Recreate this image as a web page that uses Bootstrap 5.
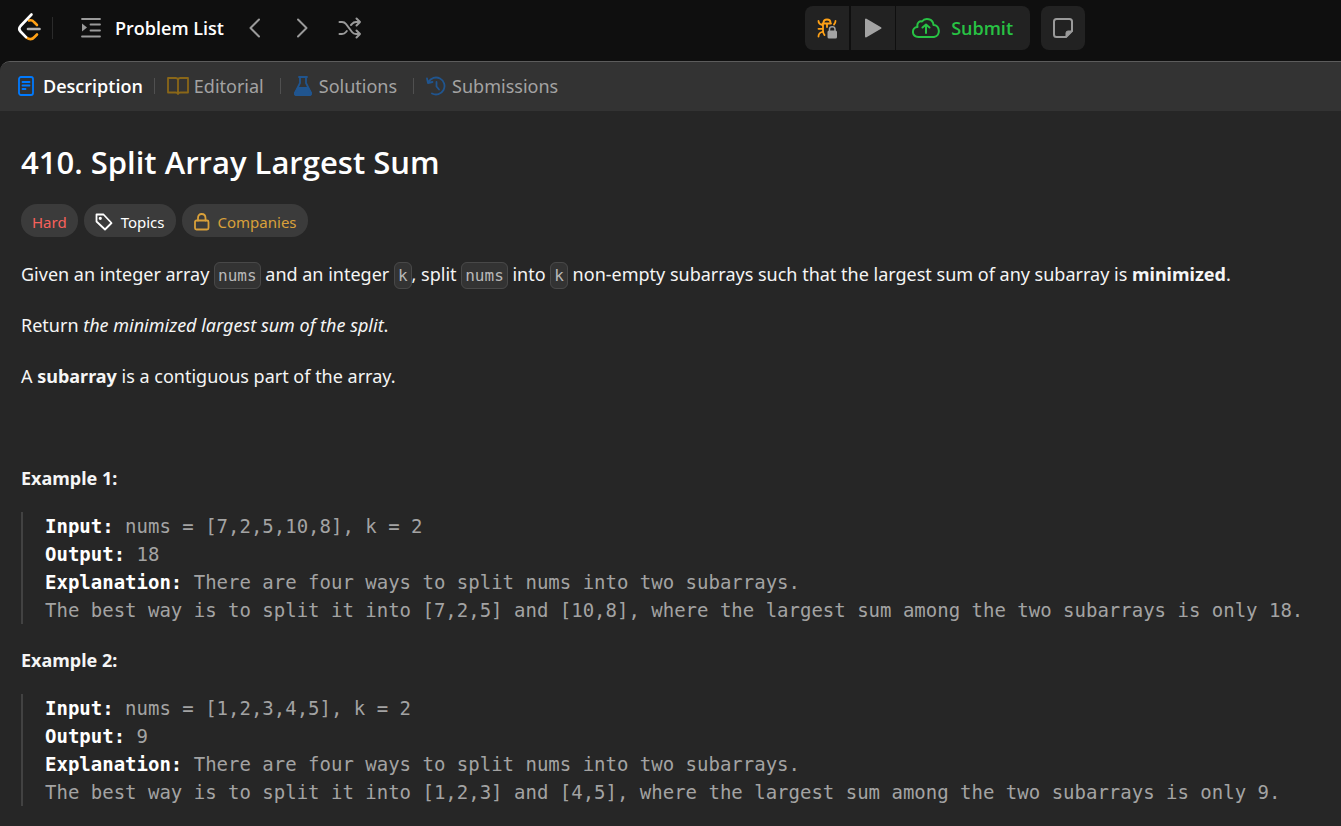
<!DOCTYPE html>
<html lang="en" data-bs-theme="dark">
<head>
<meta charset="utf-8">
<meta name="viewport" content="width=device-width, initial-scale=1">
<title>410. Split Array Largest Sum</title>
<link href="https://cdn.jsdelivr.net/npm/bootstrap@5.3.0/dist/css/bootstrap.min.css" rel="stylesheet">
<style>
  body { background: #0f0f0f; color: #f5f5f5; font-family: "Noto Sans", "Open Sans", sans-serif; font-size: 18px; line-height: 26px; }
  svg { display: block; flex: none; fill: none; stroke: currentColor; stroke-linecap: round; stroke-linejoin: round; }
  .topbar { display: grid; grid-template-columns: 60% auto 1fr; height: 61px; padding: 6px 0 11px; color: #9a9a9a; }
  .topbar a, .topbar button { color: inherit; text-decoration: none; }
  .plain-btn { background: none; border: 0; padding: 0; }
  .brand-rule { width: 1px; height: 22px; background: #2b2b2b; }
  .list-link { font-family: "Open Sans", sans-serif; font-weight: 600; font-size: 18px; gap: 14px; }
  .steps { gap: 26px; margin-left: 22px; }
  .tool-btn { background: #222; border: 0; height: 44px; width: 44px; padding: 0; display: flex; align-items: center; justify-content: center; }
  .tool-first { border-radius: 8px 0 0 8px; }
  .tool-run { margin: 0 1px 0 2px; }
  .tool-note { margin-left: 11px; }
  .tool-submit { border-radius: 0 8px 8px 0; width: 134px; font-family: "Open Sans", sans-serif; font-weight: 600; font-size: 18px; gap: 11px; }
  .topbar .tool-submit { color: #28c244; }
  .panel { background: #262626; border-top: 1px solid #5c5c5c; border-radius: 10px 0 0 0; overflow: hidden; }
  .tabs { background: #333; height: 49px; padding: 0 0 1px 18px; }
  .tabs a { color: #a3a3a3; text-decoration: none; display: flex; align-items: center; gap: 6px; }
  .tabs a.current { color: #fff; font-family: "Open Sans", sans-serif; font-weight: 600; gap: 9px; }
  .tabs .tab-tight { gap: 5px; }
  .tone-blue { color: #007aff; }
  .tone-gold { color: #8a6718; }
  .tone-navy { color: #20558f; }
  .tab-rule { width: 1px; height: 16px; background: #505050; margin: 0 12px 0 11px; }
  .problem { padding: 29px 21px 18px; }
  .problem h1 { font-family: "Open Sans", sans-serif; font-weight: 600; font-size: 31px; line-height: 44px; margin: 0 0 20px; }
  .pills { gap: 6px; }
  .pill { background: #3b3b3b; border: 0; border-radius: 16px; height: 33px; padding: 2px 11px 0; font-size: 15px; display: flex; align-items: center; gap: 8px; color: #fff; }
  .pill-hard { color: #f8615c; }
  .pill-gold { color: #d9a03a; }
  .problem p { margin: 0 0 25px; line-height: 26px; }
  .problem p.example-title { margin-bottom: 21px; }
  .problem p strong { font-weight: 700; }
  .problem code { font-family: "DejaVu Sans Mono", monospace; font-size: 16px; line-height: 20px; color: #b8b8b8; background: #333; border: 1px solid #484848; border-radius: 6px; padding: 3px; }
  .problem pre { font-family: "DejaVu Sans Mono", monospace; font-size: 19px; line-height: 28px; color: #a3a3a3; border-left: 2px solid #424242; padding-left: 22px; margin: 0 0 23px; overflow: visible; }
  .problem pre strong { color: #fff; font-weight: 700; }
</style>
</head>
<body>
<header class="topbar">
  <nav class="d-flex align-items-center">
    <a href="#" aria-label="Home" class="ms-3"><svg width="28" height="32" viewBox="0 0 28 32" stroke-width="2.600"><path stroke="#ffa116" d="M13 8.500Q16 7.500 18 10L21 13M10.500 25.500Q15 28.800 18.500 25L21 22.500"/><path stroke="#b3b3b3" d="M12 17H23.500"/><path stroke="#fff" d="M15.500 2.500 4.500 14Q2 16.800 4.500 19.500L10 25.200"/></svg></a>
    <span class="brand-rule ms-2 me-4"></span>
    <a href="#" class="list-link d-flex align-items-center"><svg class="ms-1" width="20" height="20" viewBox="0 0 20 20" stroke-width="1.800"><path d="M1 1H19M9.500 6.500H19M9.500 12.500H19M1 18.500H19"/><path d="M1 5.500 6 9.500 1 13.500Z" fill="currentColor" stroke="none"/></svg><span class="text-white">Problem List</span></a>
    <div class="steps d-flex align-items-center">
      <button class="plain-btn" aria-label="Previous problem"><svg width="18" height="22" viewBox="0 0 18 22" stroke-width="2"><path d="M13 2.500 4.500 11 13 19.500"/></svg></button>
      <button class="plain-btn" aria-label="Next problem"><svg width="22" height="22" viewBox="0 0 22 22" stroke-width="2"><path d="M8 2.500 16.500 11 8 19.500"/></svg></button>
      <button class="plain-btn" aria-label="Random problem"><svg width="24" height="22" viewBox="0 0 24 22" stroke-width="2"><path d="M1.500 5H4Q6.500 5 8 7L14 15Q15.500 17 18 17H22M1.500 17H4Q6.500 17 8 15L8.800 14M13 8 14 7Q15.500 5 18 5H22M18.500 1.500 22 5 18.500 8.500M18.500 13.500 22 17 18.500 20.500"/></svg></button>
    </div>
  </nav>
  <div class="d-flex">
    <button class="tool-btn tool-first" aria-label="Debug"><svg width="22" height="22" viewBox="0 0 22 22" stroke-width="1.800"><path stroke="#ffa116" d="M7.500 6V5.500Q7.500 2.500 11 2.500T14.500 5.500V6M6.500 6.500H15M7 7V13.500Q7 16.500 8.500 18M11 7V10M2.500 4Q2.500 7 6 8M19.500 4Q19.500 6 18 7.500M2.500 11.800H6M2.500 19.500Q2.500 16 6 15"/><rect x="11.500" y="13.500" width="9.500" height="8" rx="1.500" fill="#a3a3a3" stroke="none"/><path stroke="#a3a3a3" stroke-width="1.500" d="M13.500 13.500V12Q13.500 9.800 16.200 9.800T19 12V13.500"/></svg></button>
    <button class="tool-btn tool-run" aria-label="Run"><svg width="20" height="22" viewBox="0 0 20 22"><path fill="#a3a3a3" stroke="#a3a3a3" stroke-width="2" d="M3 2.500V19.500L17.500 11Z"/></svg></button>
    <button class="tool-btn tool-submit"><svg width="28" height="20" viewBox="0 0 28 20" stroke-width="2"><path d="M6.500 19C-1 18.500-.5 9.500 5.500 9C4.500 4 8 3 10 3.500C13-.500 21 .500 21.500 7C28 7 29 18 22 19ZM14 15V6.500M10.500 9.500 14 6.500 17.500 9.500"/></svg>Submit</button>
    <button class="tool-btn tool-note rounded-3" aria-label="Notes"><svg width="20" height="20" viewBox="0 0 20 20" stroke-width="2"><path d="M3.500 1H16.500Q19 1 19 3.500V13L13 19H3.500Q1 19 1 16.500V3.500Q1 1 3.500 1Z"/><path d="M13 19V15Q13 13 15 13H19Z" fill="currentColor" stroke-width="1"/></svg></button>
  </div>
</header>
<main class="panel">
  <nav class="tabs d-flex align-items-center">
    <a href="#" class="current"><svg class="tone-blue" width="16" height="20" viewBox="0 0 16 20" stroke-width="1.800"><rect x="1" y="1" width="14" height="18" rx="2"/><path d="M4.500 6H11.500M4.500 9.500H11.500M4.500 13H7.500"/></svg>Description</a>
    <span class="tab-rule"></span>
    <a href="#" class="tab-tight"><svg class="tone-gold" width="22" height="18" viewBox="0 0 22 18" stroke-width="1.800"><path d="M11 3Q11 1 8.500 1H1V15.500H8.500Q11 15.500 11 17Q11 15.500 13.500 15.500H21V1H13.500Q11 1 11 3V17"/></svg>Editorial</a>
    <span class="tab-rule ms-3"></span>
    <a href="#"><svg class="tone-navy" width="20" height="20" viewBox="0 0 20 20" stroke-width="1.800"><path d="M6 1H14M7 1V7L2 17Q1.500 19 3.500 19H16.500Q18.500 19 18 17L13 7V1"/><path fill="currentColor" d="M5 12H15L18 17Q18 19 16.500 19H3.500Q1.500 19 2 17Z"/></svg>Solutions</a>
    <span class="tab-rule ms-3"></span>
    <a href="#"><svg class="tone-navy" width="20" height="20" viewBox="0 0 20 20" stroke-width="1.800"><path d="M2.500 6A8.500 8.500 0 1 1 6 17.500M1 2.500 2 7 6.500 6M10.500 6V10.500L13 13.500"/></svg>Submissions</a>
  </nav>
  <article class="problem">
    <h1>410. Split Array Largest Sum</h1>
    <div class="pills d-flex mb-4">
      <span class="pill pill-hard">Hard</span>
      <button class="pill"><svg width="18" height="18" viewBox="0 0 18 18" stroke-width="1.800"><path d="M1.500 1.500H8.500L16.500 10 10 16.500 1.500 8.500Z"/><circle cx="5.300" cy="5.300" r=".7" fill="currentColor"/></svg>Topics</button>
      <button class="pill pill-gold"><svg width="17" height="18" viewBox="0 0 17 18" stroke-width="1.800"><rect x="2" y="7.500" width="13.500" height="9" rx="1.500"/><path d="M5 7.500V5Q5 1 8.700 1T12.500 5V7.500"/></svg>Companies</button>
    </div>
    <p>Given an integer array <code>nums</code> and an integer <code>k</code>, split <code>nums</code> into <code>k</code> non-empty subarrays such that the largest sum of any subarray is <strong>minimized</strong>.</p>
    <p>Return <em>the minimized largest sum of the split</em>.</p>
    <p>A <strong>subarray</strong> is a contiguous part of the array.</p>
    <p>&nbsp;</p>
    <p class="example-title"><strong>Example 1:</strong></p>
<pre><strong>Input:</strong> nums = [7,2,5,10,8], k = 2
<strong>Output:</strong> 18
<strong>Explanation:</strong> There are four ways to split nums into two subarrays.
The best way is to split it into [7,2,5] and [10,8], where the largest sum among the two subarrays is only 18.</pre>
    <p class="example-title"><strong>Example 2:</strong></p>
<pre><strong>Input:</strong> nums = [1,2,3,4,5], k = 2
<strong>Output:</strong> 9
<strong>Explanation:</strong> There are four ways to split nums into two subarrays.
The best way is to split it into [1,2,3] and [4,5], where the largest sum among the two subarrays is only 9.</pre>
  </article>
</main>
<script src="https://cdn.jsdelivr.net/npm/bootstrap@5.3.0/dist/js/bootstrap.bundle.min.js"></script>
</body>
</html>
